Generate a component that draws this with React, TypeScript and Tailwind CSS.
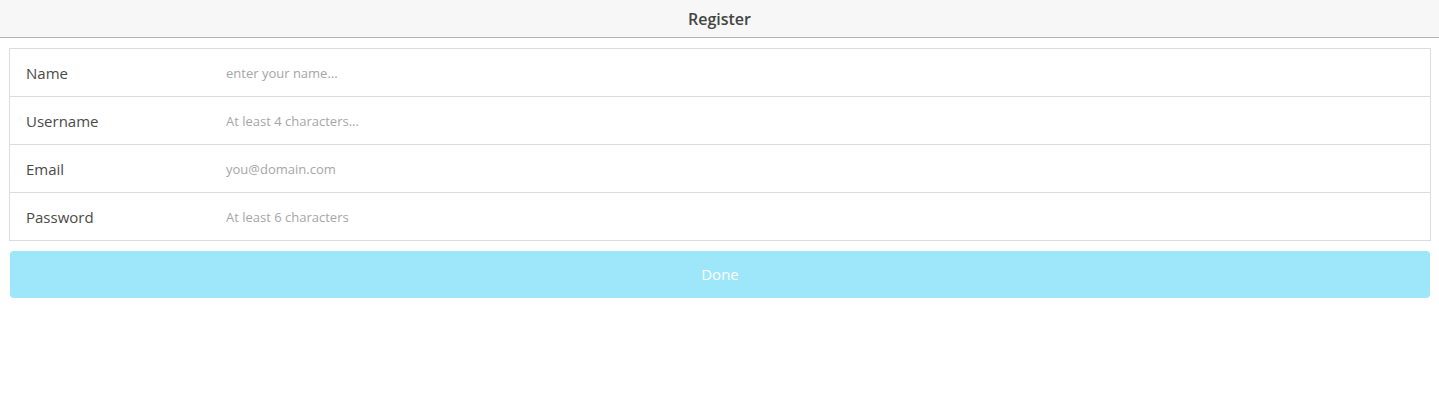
import React, { useState } from "react";

const fields = [
  { label: "Name", placeholder: "enter your name...", type: "text" },
  { label: "Username", placeholder: "At least 4 characters...", type: "text" },
  { label: "Email", placeholder: "you@domain.com", type: "email" },
  { label: "Password", placeholder: "At least 6 characters", type: "password" },
];

export default function App() {
  const [values, setValues] = useState<string[]>(["", "", "", ""]);

  return (
    <div className="min-h-[418px] bg-white font-['Open_Sans','Noto_Sans',sans-serif]">
      {/* Header */}
      <div className="h-[38px] bg-[#f7f7f7] border-b border-[#b3b3b3] flex items-center justify-center">
        <h1 className="text-[16px] text-[#444] font-semibold">Register</h1>
      </div>

      {/* Form */}
      <div className="ml-[9px] mr-[8px] mt-[10px] border border-[#dcdcdc]">
        {fields.map((f, i) => (
          <div
            key={f.label}
            className={
              i < fields.length - 1
                ? "h-[48px] flex items-center border-b border-[#dcdcdc]"
                : "h-[47px] flex items-center"
            }
          >
            <label className="w-[216px] pl-[16px] pt-px text-[15px] text-[#4a4a4a]">{f.label}</label>
            <input
              type={f.type}
              placeholder={f.placeholder}
              value={values[i]}
              onChange={(e) => {
                const next = [...values];
                next[i] = e.target.value;
                setValues(next);
              }}
              className="flex-1 h-full pt-px outline-none text-[13px] text-[#333] placeholder:text-[#a6a6a6]"
            />
          </div>
        ))}
      </div>

      {/* Done button */}
      <div className="ml-[10px] mr-[9px] mt-[10px]">
        <button className="w-full h-[47px] rounded-[4px] bg-[#9ee6fa] text-white text-[15px]">
          Done
        </button>
      </div>
    </div>
  );
}
